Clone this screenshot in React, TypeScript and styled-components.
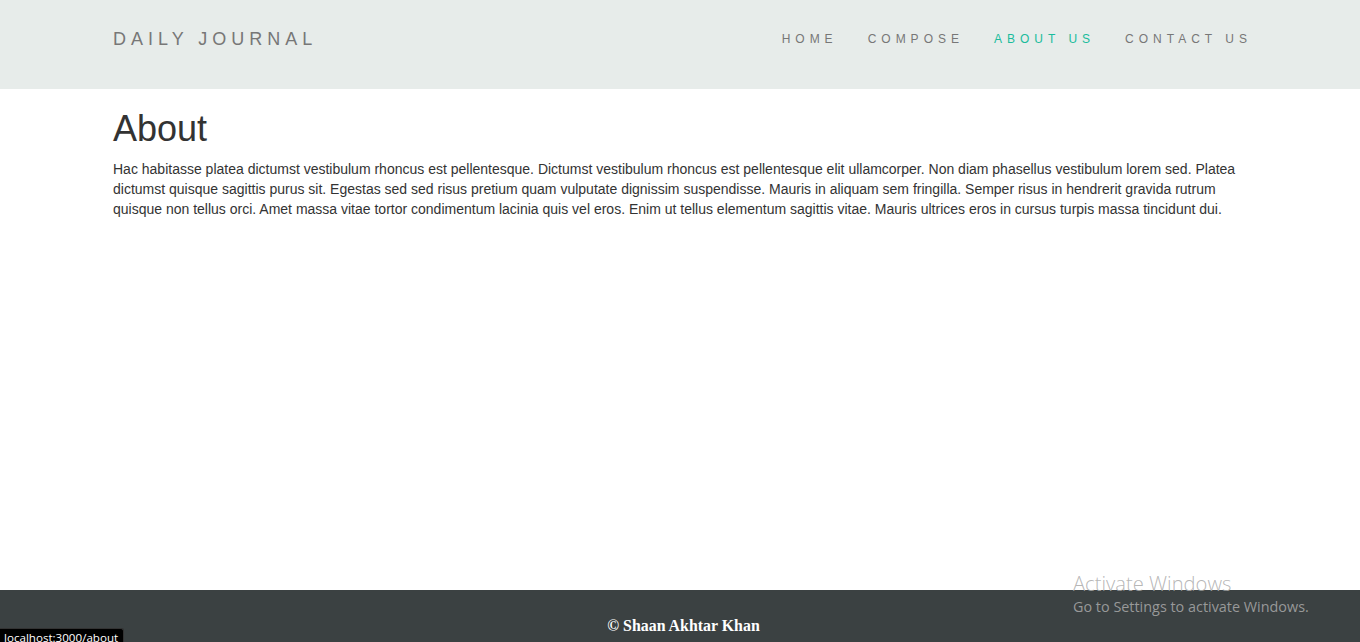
import React from "react";
import styled, { createGlobalStyle } from "styled-components";

const Global = createGlobalStyle`
  html, body { margin: 0; padding: 0; height: 100%; }
  body {
    font-family: "Liberation Sans", Arial, sans-serif;
    font-size: 14px;
    line-height: 20px;
    color: #333;
    background: #fff;
  }
  #root { height: 100%; }
`;

const Page = styled.div`
  display: flex;
  flex-direction: column;
  height: 642px;
  overflow: hidden;
  position: relative;
`;

const Header = styled.header`
  background: #e7ecea;
  height: 89px;
  box-sizing: border-box;
  flex: none;
  display: flex;
  align-items: center;
  justify-content: space-between;
  padding: 0 93px 12px 113px;
`;

const Brand = styled.a`
  font-size: 18px;
  letter-spacing: 5px;
  color: #777;
  text-decoration: none;
  line-height: 20px;
`;

const Nav = styled.nav`
  display: flex;
`;

const NavLink = styled.a<{ $active?: boolean }>`
  font-size: 12px;
  letter-spacing: 5px;
  padding: 0 15px;
  color: ${(p) => (p.$active ? "#1abc9c" : "#777")};
  text-decoration: none;
  line-height: 20px;
`;

const Main = styled.main`
  flex: 1;
  padding: 0 113px;
`;

const Title = styled.h1`
  font-size: 36px;
  font-weight: 500;
  line-height: 40px;
  margin: 20px 0 10px;
  color: #333;
`;

const Text = styled.p`
  margin: 0;
  max-width: 1136px;
`;

const Footer = styled.footer`
  flex: none;
  height: 52px;
  background: #3b4142;
  text-align: center;
  padding-left: 7px;
`;

const FooterText = styled.p`
  margin: 26px 0 0;
  font-family: "Liberation Serif", "Times New Roman", serif;
  font-weight: 700;
  font-size: 15.9px;
  line-height: 20px;
  color: #fff;
`;

const StatusBar = styled.div`
  position: absolute;
  left: 0;
  bottom: 0;
  height: 13px;
  padding: 0 5px 0 4px;
  background: #000;
  border-top-right-radius: 3px;
  border-top: 1px solid #333;
  border-right: 1px solid #333;
  color: #fff;
  font-family: "Open Sans", "Noto Sans", sans-serif;
  font-size: 11.6px;
  line-height: 17px;
  overflow: hidden;
`;

const Watermark = styled.div`
  position: absolute;
  left: 1073px;
  top: 570px;
  color: rgba(170, 170, 170, 0.85);
  font-family: "Open Sans", "Noto Sans", sans-serif;
  pointer-events: none;
`;

const WatermarkTitle = styled.div`
  font-size: 20.2px;
  line-height: 27px;
  font-weight: 300;
`;

const WatermarkSub = styled.div`
  font-size: 14.4px;
  line-height: 20px;
`;

export default function App() {
  return (
    <Page>
      <Global />
      <Header>
        <Brand href="#">DAILY JOURNAL</Brand>
        <Nav>
          <NavLink href="#">HOME</NavLink>
          <NavLink href="#">COMPOSE</NavLink>
          <NavLink href="#" $active>
            ABOUT US
          </NavLink>
          <NavLink href="#">CONTACT US</NavLink>
        </Nav>
      </Header>
      <Main>
        <Title>About</Title>
        <Text>
          Hac habitasse platea dictumst vestibulum rhoncus est pellentesque. Dictumst vestibulum
          rhoncus est pellentesque elit ullamcorper. Non diam phasellus vestibulum lorem sed. Platea
          dictumst quisque sagittis purus sit. Egestas sed sed risus pretium quam vulputate dignissim
          suspendisse. Mauris in aliquam sem fringilla. Semper risus in hendrerit gravida rutrum
          quisque non tellus orci. Amet massa vitae tortor condimentum lacinia quis vel eros. Enim ut
          tellus elementum sagittis vitae. Mauris ultrices eros in cursus turpis massa tincidunt dui.
        </Text>
      </Main>
      <Footer>
        <FooterText>© Shaan Akhtar Khan</FooterText>
      </Footer>
      <Watermark>
        <WatermarkTitle>Activate Windows</WatermarkTitle>
        <WatermarkSub>Go to Settings to activate Windows.</WatermarkSub>
      </Watermark>
      <StatusBar>localhost:3000/about</StatusBar>
    </Page>
  );
}
